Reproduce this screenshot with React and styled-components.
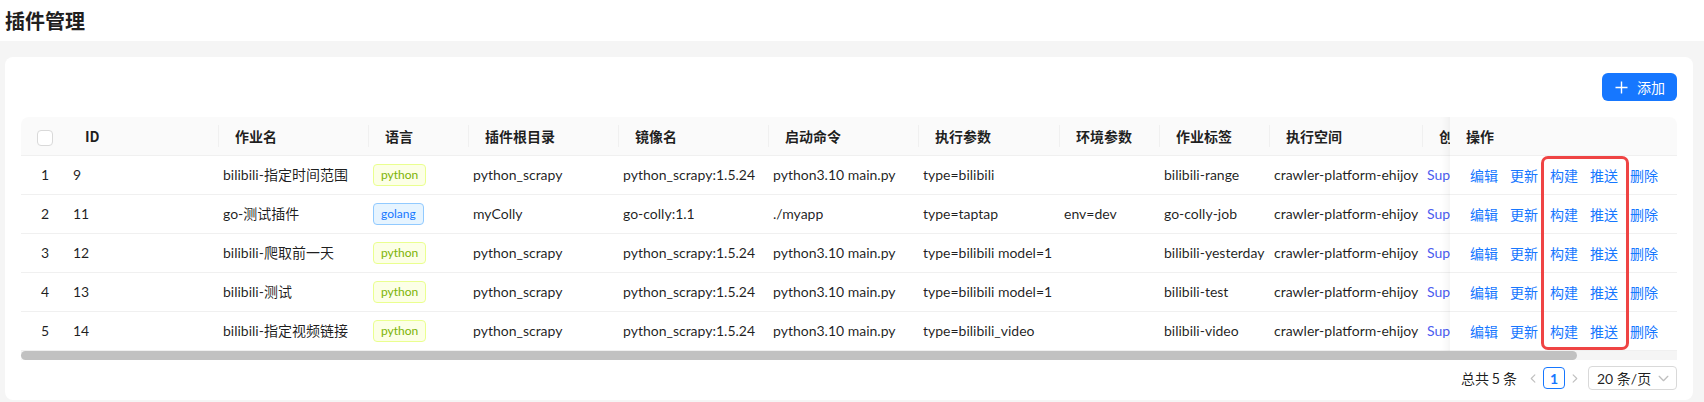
import React from "react";
import styled, { createGlobalStyle } from "styled-components";

const GlobalStyle = createGlobalStyle`
  html, body {
    margin: 0;
    padding: 0;
    background: #f5f5f5;
  }
  body {
    font-family: Lato, "Noto Sans CJK SC", sans-serif;
    font-size: 14px;
    color: rgba(0, 0, 0, 0.88);
  }
  * { box-sizing: border-box; }
`;

const TABLE_VIEW = 1656;
const TABLE_FULL = 1762;

const Page = styled.div`
  width: 1704px;
  height: 402px;
  overflow: hidden;
  display: flex;
  flex-direction: column;
  background: #f5f5f5;
`;

const TopBar = styled.header`
  height: 41px;
  flex: none;
  background: #fff;
  display: flex;
  align-items: center;
  padding-left: 5px;
`;

const Title = styled.h1`
  margin: 0;
  font-family: "Noto Sans CJK SC", sans-serif;
  font-size: 20px;
  font-weight: 700;
  line-height: 1;
  color: #1f1f1f;
`;

const Content = styled.main`
  flex: 1;
  min-height: 0;
  display: flex;
  padding: 16px 11px 2px 5px;
`;

const Card = styled.section`
  position: relative;
  flex: 1;
  min-width: 0;
  display: flex;
  flex-direction: column;
  background: #fff;
  border-radius: 8px;
  padding: 16px 16px 0;
`;

const Toolbar = styled.div`
  display: flex;
  justify-content: flex-end;
  margin-bottom: 16px;
`;

const PrimaryButton = styled.button`
  height: 28px;
  display: inline-flex;
  align-items: center;
  gap: 9px;
  padding: 0 12px 0 13px;
  border: none;
  border-radius: 6px;
  background: #1677ff;
  color: #fff;
  font-family: "Noto Sans CJK SC", sans-serif;
  font-size: 14px;
  cursor: pointer;
`;

const Scroller = styled.div`
  overflow: hidden;
  border-radius: 8px 8px 0 0;
`;

const ScrollTrack = styled.div`
  height: 9px;
  background: #f5f5f5;
  display: flex;
`;

const ScrollThumb = styled.div`
  height: 100%;
  background: #c1c1c1;
  border-radius: 5px;
`;

const Table = styled.table`
  width: ${TABLE_FULL}px;
  table-layout: fixed;
  border-collapse: separate;
  border-spacing: 0;
`;

const Th = styled.th`
  position: ${(p) => (p.$fixed ? "sticky" : "relative")};
  right: ${(p) => (p.$fixed ? "0" : "auto")};
  z-index: ${(p) => (p.$fixed ? 2 : "auto")};
  height: 39px;
  background: #fafafa;
  text-align: ${(p) => (p.$center ? "center" : "left")};
  font-family: "Noto Sans CJK SC", sans-serif;
  font-weight: 600;
  color: rgba(0, 0, 0, 0.88);
  line-height: 22px;
  padding: 0 ${(p) => (p.$center ? "0" : "8px")} 0 ${(p) => (p.$center ? "0" : "16px")};
  border-bottom: 1px solid #f0f0f0;
  white-space: nowrap;
  overflow: ${(p) => (p.$fixed ? "visible" : "hidden")};
  vertical-align: middle;

  &::before {
    content: "";
    display: ${(p) => (p.$sep ? "block" : "none")};
    position: absolute;
    right: 0;
    top: 50%;
    width: 1px;
    height: 22px;
    transform: translateY(-50%);
    background: #f0f0f0;
  }

  &::after {
    content: "";
    display: ${(p) => (p.$fixed ? "block" : "none")};
    position: absolute;
    top: 0;
    bottom: -1px;
    left: 0;
    width: 30px;
    transform: translateX(-100%);
    box-shadow: inset -10px 0 8px -8px rgba(5, 5, 5, 0.06);
    pointer-events: none;
  }
`;

const Td = styled.td`
  position: ${(p) => (p.$fixed ? "sticky" : "static")};
  right: ${(p) => (p.$fixed ? "0" : "auto")};
  z-index: ${(p) => (p.$fixed ? 2 : "auto")};
  height: 39px;
  background: #fff;
  text-align: ${(p) => (p.$center ? "center" : "left")};
  color: ${(p) => p.$color || "rgba(0, 0, 0, 0.88)"};
  line-height: 22px;
  padding: 0 4px 0 ${(p) => (p.$fixed ? "20px" : "4px")};
  border-bottom: 1px solid #f0f0f0;
  white-space: nowrap;
  overflow: ${(p) => (p.$fixed ? "visible" : "hidden")};
  vertical-align: middle;

  &::after {
    content: "";
    display: ${(p) => (p.$fixed ? "block" : "none")};
    position: absolute;
    top: 0;
    bottom: -1px;
    left: 0;
    width: 30px;
    transform: translateX(-100%);
    box-shadow: inset -10px 0 8px -8px rgba(5, 5, 5, 0.06);
    pointer-events: none;
  }
`;

const Checkbox = styled.span`
  display: inline-block;
  width: 16px;
  height: 16px;
  vertical-align: middle;
  border: 1px solid #d9d9d9;
  border-radius: 4px;
  background: #fff;
`;

const tagColors = {
  python: { bg: "#fcffe6", border: "#eaff8f", fg: "#7cb305" },
  golang: { bg: "#e6f4ff", border: "#91caff", fg: "#1677ff" },
};

const Tag = styled.span`
  display: inline-block;
  height: 22px;
  padding: 0 7px;
  font-size: 12px;
  line-height: 20px;
  border-radius: 4px;
  border: 1px solid ${(p) => tagColors[p.$lang].border};
  background: ${(p) => tagColors[p.$lang].bg};
  color: ${(p) => tagColors[p.$lang].fg};
  vertical-align: top;
`;

const Actions = styled.div`
  display: flex;
  gap: 12px;
  font-family: "Noto Sans CJK SC", sans-serif;
`;

const ActionLink = styled.a`
  color: #1677ff;
  text-decoration: none;
  cursor: pointer;
`;

const Highlight = styled.div`
  position: absolute;
  left: 1536px;
  top: 99px;
  width: 88px;
  height: 194px;
  border: 3px solid #ef4444;
  border-radius: 7px;
  pointer-events: none;
  z-index: 5;
`;

const Pager = styled.nav`
  display: flex;
  justify-content: flex-end;
  align-items: center;
  height: 24px;
  margin-top: 6px;
`;

const Total = styled.span`
  margin-right: 7px;
  line-height: 24px;
  font-family: "Noto Sans CJK SC", sans-serif;
`;

const PagerArrow = styled.span`
  width: 19px;
  height: 24px;
  display: flex;
  align-items: center;
  justify-content: center;
`;

const PageItem = styled.span`
  width: 22px;
  height: 22px;
  display: flex;
  align-items: center;
  justify-content: center;
  border: 1px solid #1677ff;
  border-radius: 4px;
  color: #1677ff;
  font-weight: 700;
  font-size: 14px;
`;

const SizeSelect = styled.div`
  margin-left: 4px;
  width: 89px;
  height: 24px;
  display: flex;
  align-items: center;
  justify-content: space-between;
  padding: 0 6px 0 8px;
  border: 1px solid #d9d9d9;
  border-radius: 4px;
  color: rgba(0, 0, 0, 0.88);
`;

const Chevron = ({ dir = "down", size = 11, color = "#bfbfbf" }) => {
  const pts = {
    down: "2,4 6,8 10,4",
    left: "7.5,2 3.5,6 7.5,10",
    right: "4.5,2 8.5,6 4.5,10",
  }[dir];
  return (
    <svg width={size} height={size} viewBox="0 0 12 12" fill="none">
      <polyline points={pts} stroke={color} strokeWidth="1.2" strokeLinecap="round" strokeLinejoin="round" />
    </svg>
  );
};

const PlusIcon = () => (
  <svg width="13" height="13" viewBox="0 0 13 13">
    <path d="M6.5 0.5v12M0.5 6.5h12" stroke="#fff" strokeWidth="1.4" />
  </svg>
);

const columns = [
  { key: "idx", width: 48, center: true },
  { key: "id", title: "ID", width: 150, sep: true },
  { key: "name", title: "作业名", width: 150, sep: true },
  { key: "lang", title: "语言", width: 100, sep: true },
  { key: "root", title: "插件根目录", width: 150, sep: true },
  { key: "image", title: "镜像名", width: 150, sep: true },
  { key: "cmd", title: "启动命令", width: 150, sep: true },
  { key: "args", title: "执行参数", width: 141, sep: true },
  { key: "env", title: "环境参数", width: 100, sep: true },
  { key: "label", title: "作业标签", width: 110, sep: true },
  { key: "ns", title: "执行空间", width: 153, sep: true },
  { key: "creator", title: "创建人", width: 133, sep: true },
  { key: "ops", title: "操作", width: 227, fixed: true },
];

const rows = [
  { id: 9, name: "bilibili-指定时间范围", lang: "python", root: "python_scrapy", image: "python_scrapy:1.5.24", cmd: "python3.10 main.py", args: "type=bilibili", env: "", label: "bilibili-range" },
  { id: 11, name: "go-测试插件", lang: "golang", root: "myColly", image: "go-colly:1.1", cmd: "./myapp", args: "type=taptap", env: "env=dev", label: "go-colly-job" },
  { id: 12, name: "bilibili-爬取前一天", lang: "python", root: "python_scrapy", image: "python_scrapy:1.5.24", cmd: "python3.10 main.py", args: "type=bilibili model=1", env: "", label: "bilibili-yesterday" },
  { id: 13, name: "bilibili-测试", lang: "python", root: "python_scrapy", image: "python_scrapy:1.5.24", cmd: "python3.10 main.py", args: "type=bilibili model=1", env: "", label: "bilibili-test" },
  { id: 14, name: "bilibili-指定视频链接", lang: "python", root: "python_scrapy", image: "python_scrapy:1.5.24", cmd: "python3.10 main.py", args: "type=bilibili_video", env: "", label: "bilibili-video" },
];

const actions = ["编辑", "更新", "构建", "推送", "删除"];

export default function App() {
  const thumbWidth = Math.round((TABLE_VIEW / TABLE_FULL) * TABLE_VIEW);
  return (
    <>
      <GlobalStyle />
      <Page>
        <TopBar>
          <Title>插件管理</Title>
        </TopBar>
        <Content>
          <Card>
            <Toolbar>
              <PrimaryButton>
                <PlusIcon />
                添加
              </PrimaryButton>
            </Toolbar>
            <Scroller>
              <Table>
                <colgroup>
                  {columns.map((c) => (
                    <col key={c.key} style={{ width: c.width }} />
                  ))}
                </colgroup>
                <thead>
                  <tr>
                    {columns.map((c) => (
                      <Th key={c.key} $center={c.center} $sep={c.sep} $fixed={c.fixed}>
                        {c.key === "idx" ? <Checkbox /> : c.title}
                      </Th>
                    ))}
                  </tr>
                </thead>
                <tbody>
                  {rows.map((r, i) => (
                    <tr key={r.id}>
                      <Td $center>{i + 1}</Td>
                      <Td>{r.id}</Td>
                      <Td>{r.name}</Td>
                      <Td>
                        <Tag $lang={r.lang}>{r.lang}</Tag>
                      </Td>
                      <Td>{r.root}</Td>
                      <Td>{r.image}</Td>
                      <Td>{r.cmd}</Td>
                      <Td>{r.args}</Td>
                      <Td>{r.env}</Td>
                      <Td>{r.label}</Td>
                      <Td>crawler-platform-ehijoy</Td>
                      <Td $color="#4b5cf0">SuperAdmin</Td>
                      <Td $fixed>
                        <Actions>
                          {actions.map((a) => (
                            <ActionLink key={a}>{a}</ActionLink>
                          ))}
                        </Actions>
                      </Td>
                    </tr>
                  ))}
                </tbody>
              </Table>
            </Scroller>
            <ScrollTrack>
              <ScrollThumb style={{ width: thumbWidth }} />
            </ScrollTrack>
            <Pager>
              <Total>总共 5 条</Total>
              <PagerArrow>
                <Chevron dir="left" />
              </PagerArrow>
              <PageItem>1</PageItem>
              <PagerArrow>
                <Chevron dir="right" />
              </PagerArrow>
              <SizeSelect>
                <span>20 条/页</span>
                <Chevron dir="down" size={13} />
              </SizeSelect>
            </Pager>
            <Highlight />
          </Card>
        </Content>
      </Page>
    </>
  );
}
